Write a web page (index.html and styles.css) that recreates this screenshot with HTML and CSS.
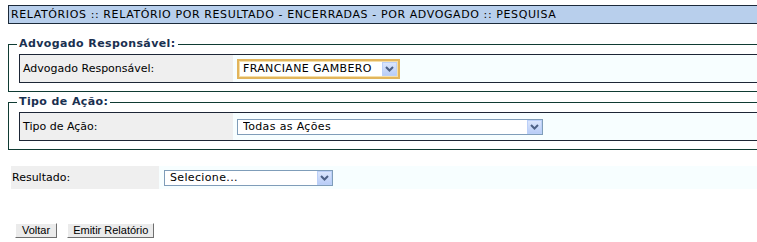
FILE: index.html
```html
<!DOCTYPE html>
<html lang="pt-BR">
<head>
    <meta charset="UTF-8">
    <title>Relatório por Resultado - Pesquisa</title>
    <link rel="stylesheet" href="styles.css">
</head>
<body>

<div class="page">
    <div class="titlebar">RELATÓRIOS :: RELATÓRIO POR RESULTADO - ENCERRADAS - POR ADVOGADO :: PESQUISA</div>

    <form id="filtro" onsubmit="return false">
        <fieldset class="group first">
            <legend>Advogado Responsável:</legend>
            <table class="fields">
                <tr>
                    <td class="label">Advogado Responsável:</td>
                    <td class="value">
                        <span class="combo focused w-adv">
                            <select name="advogado">
                                <option>FRANCIANE GAMBERO</option>
                            </select>
                            <span class="arrow"><svg width="9" height="6" viewBox="0 0 9 6"><polyline points="1,1 4.5,4.5 8,1" fill="none" stroke="#4d6185" stroke-width="2"/></svg></span>
                        </span>
                    </td>
                </tr>
            </table>
        </fieldset>

        <fieldset class="group">
            <legend>Tipo de Ação:</legend>
            <table class="fields">
                <tr>
                    <td class="label">Tipo de Ação:</td>
                    <td class="value">
                        <span class="combo w-tipo">
                            <select name="tipo">
                                <option>Todas as Ações</option>
                            </select>
                            <span class="arrow"><svg width="9" height="6" viewBox="0 0 9 6"><polyline points="1,1 4.5,4.5 8,1" fill="none" stroke="#4d6185" stroke-width="2"/></svg></span>
                        </span>
                    </td>
                </tr>
            </table>
        </fieldset>

        <table class="plain">
            <tr>
                <td class="label">Resultado:</td>
                <td class="value">
                    <span class="combo w-res">
                        <select name="resultado">
                            <option>Selecione...</option>
                        </select>
                        <span class="arrow"><svg width="9" height="6" viewBox="0 0 9 6"><polyline points="1,1 4.5,4.5 8,1" fill="none" stroke="#4d6185" stroke-width="2"/></svg></span>
                    </span>
                </td>
            </tr>
        </table>

        <div class="buttons">
            <input type="button" value="Voltar">
            <input type="submit" value="Emitir Relatório">
        </div>
    </form>
</div>

</body>
</html>
```

FILE: styles.css
```css
body {
    margin: 0;
    font-family: "DejaVu Sans", Verdana, sans-serif;
    font-size: 11px;
    color: #000;
    background-color: #fff;
    overflow: hidden;
}
.page {
    width: 800px;
    padding-top: 5px;
}
.titlebar {
    margin-left: 8px;
    height: 17px;
    line-height: 17px;
    padding-left: 2px;
    letter-spacing: 0.6px;
    background-color: #b8cfec;
    border: 1px solid #1c2a3a;
    white-space: nowrap;
}
.group {
    margin: 3px 0 0 8px;
    padding: 3px 0 8px 10px;
    border: 1px solid #0f3b33;
    min-width: 0;
}
.group.first {
    margin-top: 13px;
}
.group legend {
    padding: 0 2px;
    margin-left: -2px;
    font-weight: bold;
    line-height: 14px;
    letter-spacing: 0.4px;
    color: #1a3050;
}
.fields {
    width: 100%;
    border-collapse: collapse;
    border: 1px solid #1d2636;
}
.fields td {
    padding: 0;
    height: 27px;
}
.label {
    background-color: #efefef;
    padding-left: 3px !important;
    width: 210px;
    white-space: nowrap;
}
.value {
    background-color: #f7feff;
    padding-left: 4px !important;
}
.plain {
    margin: 16px 0 0 11px;
    width: 790px;
    border-collapse: collapse;
}
.plain td {
    padding: 0;
    height: 23px;
}
.plain .label {
    width: 147px;
    padding-left: 1px !important;
}
.plain .value {
    padding-left: 5px !important;
}
.combo {
    position: relative;
    display: inline-block;
    vertical-align: middle;
    height: 16px;
}
.combo select {
    -webkit-appearance: none;
    appearance: none;
    box-sizing: border-box;
    width: 100%;
    height: 100%;
    margin: 0;
    padding: 0 0 0 5px;
    border: 1px solid #7f9db9;
    border-radius: 0;
    background-color: #fff;
    font-family: "DejaVu Sans", Verdana, sans-serif;
    font-size: 11px;
    letter-spacing: 0.35px;
    color: #000;
    outline: none;
}
.combo .arrow {
    position: absolute;
    top: 1px;
    right: 1px;
    bottom: 1px;
    width: 15px;
    box-sizing: border-box;
    border: 1px solid #bcd0f8;
    background: linear-gradient(#dbe6fd, #b9cdf7);
    display: flex;
    align-items: center;
    justify-content: center;
}
.combo.focused {
    height: 20px;
}
.combo.focused select {
    border: 2px solid #e2b55c;
    box-shadow: inset 0 0 0 1px #f6dfa8;
    padding-left: 4px;
}
.combo.focused .arrow {
    top: 3px;
    right: 3px;
    bottom: 3px;
}
.w-adv { width: 163px; }
.w-tipo { width: 306px; }
.w-res { width: 169px; }
.buttons {
    margin: 34px 0 0 15px;
    display: flex;
    gap: 10px;
}
.buttons input {
    height: 15px;
    padding: 0 6px;
    font-family: "Liberation Sans", Tahoma, sans-serif;
    font-size: 11px;
    color: #000;
    background-color: #ebebeb;
    border: 1px solid;
    border-color: #fff #6f6f6f #6f6f6f #fff;
    border-radius: 0;
    box-sizing: border-box;
    line-height: 13px;
}
.buttons input[type="submit"] {
    padding: 0 5px;
}
```
